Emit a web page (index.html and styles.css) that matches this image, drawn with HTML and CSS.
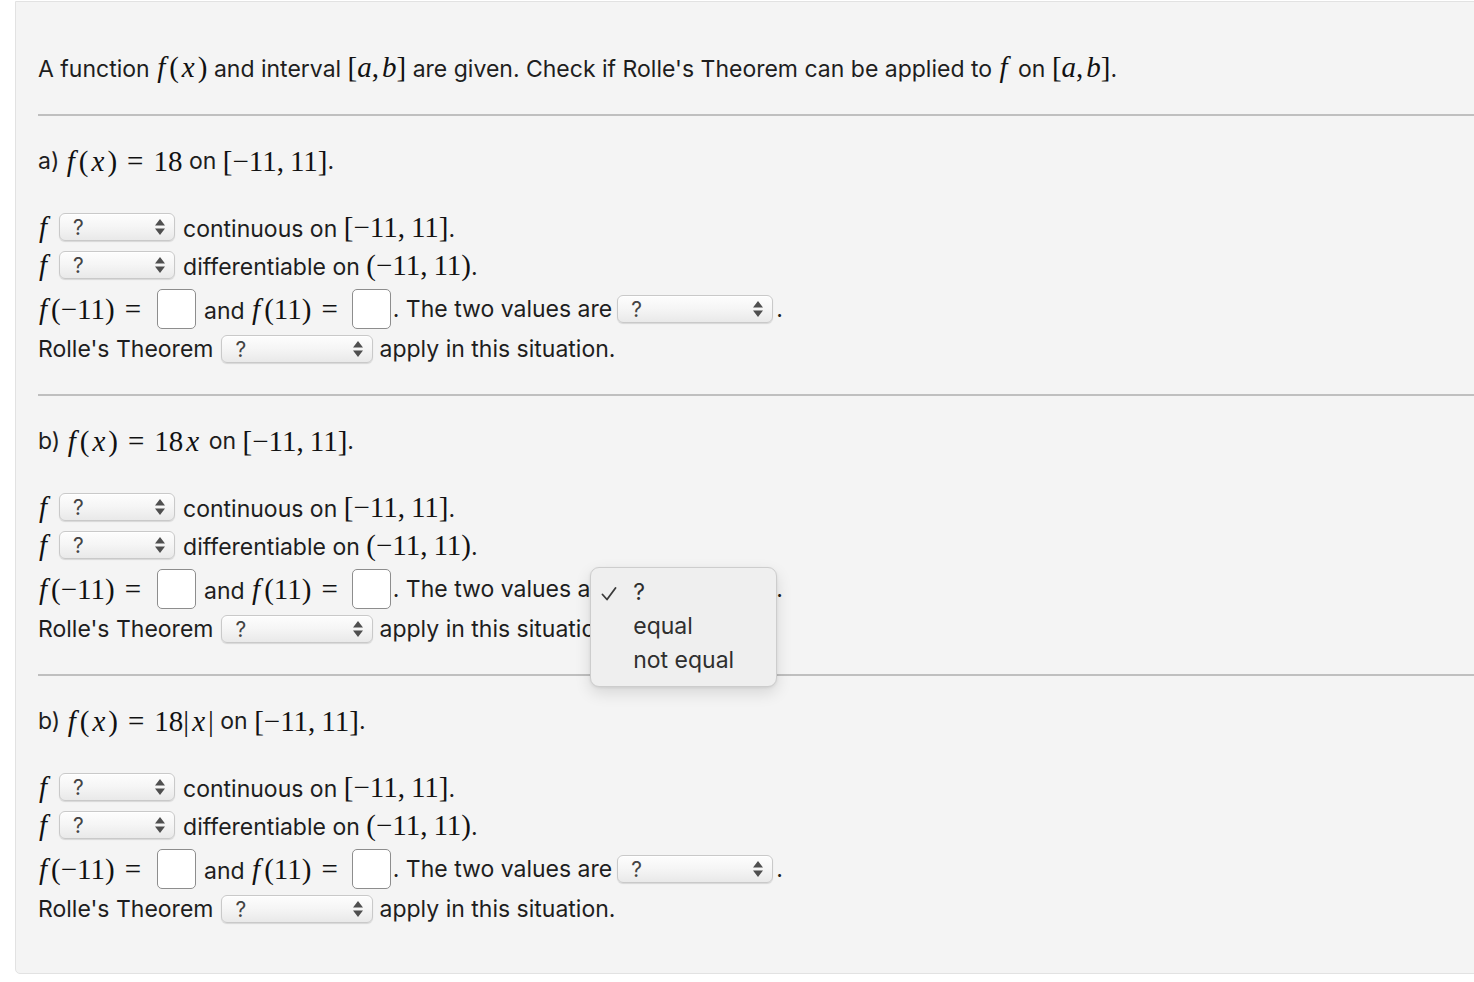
FILE: index.html
```html
<!DOCTYPE html>
<html>
<head>
<meta charset="utf-8">
<link rel="stylesheet" href="styles.css">
</head>
<body>
<div class="card">
  <div class="intro">A function <span class="m"><i class="f">f</i>(<i class="v">x</i>)</span> and interval <span class="m">[<i>a</i>,<span class="th"></span><i>b</i>]</span> are given. Check if Rolle's Theorem can be applied to <span class="m"><i class="f">f</i></span> on <span class="m">[<i>a</i>,<span class="th"></span><i>b</i>]</span>.</div>
  <div class="rule"></div>

  <div class="part">
    <div class="title">a)&nbsp;<span class="m"><i class="f">f</i>(<i class="v">x</i>)<span class="rel">=</span>18</span>&nbsp;on&nbsp;<span class="m">[−11,<span class="th"></span>11]</span>.</div>
    <div class="row r1"><span class="m"><i class="f">f</i></span><span class="sel s1"><span class="q">?</span><span class="arr"><svg width="10" height="16" viewBox="0 0 10 16"><path d="M5 0 L10 6.5 L0 6.5 Z M5 16 L10 9.5 L0 9.5 Z" fill="#4f4f4f"/></svg></span></span><span class="txt">continuous on&nbsp;<span class="m">[−11,<span class="th"></span>11]</span>.</span></div>
    <div class="row r2"><span class="m"><i class="f">f</i></span><span class="sel s1"><span class="q">?</span><span class="arr"><svg width="10" height="16" viewBox="0 0 10 16"><path d="M5 0 L10 6.5 L0 6.5 Z M5 16 L10 9.5 L0 9.5 Z" fill="#4f4f4f"/></svg></span></span><span class="txt">differentiable on&nbsp;<span class="m">(−11,<span class="th"></span>11)</span>.</span></div>
    <div class="row r3"><span class="m"><i class="f">f</i>(−11)<span class="rel">=</span></span><span class="box"></span><span class="txt">and&nbsp;<span class="m"><i class="f">f</i>(11)<span class="rel">=</span></span></span><span class="box b2"></span><span class="txt t3">. The two values are</span><span class="sel s3"><span class="q">?</span><span class="arr"><svg width="10" height="16" viewBox="0 0 10 16"><path d="M5 0 L10 6.5 L0 6.5 Z M5 16 L10 9.5 L0 9.5 Z" fill="#4f4f4f"/></svg></span></span><span class="dot">.</span></div>
    <div class="row r4"><span class="lbl">Rolle's Theorem</span><span class="sel s2"><span class="q">?</span><span class="arr"><svg width="10" height="16" viewBox="0 0 10 16"><path d="M5 0 L10 6.5 L0 6.5 Z M5 16 L10 9.5 L0 9.5 Z" fill="#4f4f4f"/></svg></span></span><span class="txt t4">apply in this situation.</span></div>
  </div>
  <div class="rule"></div>

  <div class="part">
    <div class="title">b)&nbsp;<span class="m"><i class="f">f</i>(<i class="v">x</i>)<span class="rel">=</span>18<i class="v">x</i></span>&nbsp;on&nbsp;<span class="m">[−11,<span class="th"></span>11]</span>.</div>
    <div class="row r1"><span class="m"><i class="f">f</i></span><span class="sel s1"><span class="q">?</span><span class="arr"><svg width="10" height="16" viewBox="0 0 10 16"><path d="M5 0 L10 6.5 L0 6.5 Z M5 16 L10 9.5 L0 9.5 Z" fill="#4f4f4f"/></svg></span></span><span class="txt">continuous on&nbsp;<span class="m">[−11,<span class="th"></span>11]</span>.</span></div>
    <div class="row r2"><span class="m"><i class="f">f</i></span><span class="sel s1"><span class="q">?</span><span class="arr"><svg width="10" height="16" viewBox="0 0 10 16"><path d="M5 0 L10 6.5 L0 6.5 Z M5 16 L10 9.5 L0 9.5 Z" fill="#4f4f4f"/></svg></span></span><span class="txt">differentiable on&nbsp;<span class="m">(−11,<span class="th"></span>11)</span>.</span></div>
    <div class="row r3"><span class="m"><i class="f">f</i>(−11)<span class="rel">=</span></span><span class="box"></span><span class="txt">and&nbsp;<span class="m"><i class="f">f</i>(11)<span class="rel">=</span></span></span><span class="box b2"></span><span class="txt t3">. The two values are</span><span class="anchor"><span class="sel s3"><span class="q">?</span><span class="arr"><svg width="10" height="16" viewBox="0 0 10 16"><path d="M5 0 L10 6.5 L0 6.5 Z M5 16 L10 9.5 L0 9.5 Z" fill="#4f4f4f"/></svg></span></span><span class="menu"><span class="item"><svg class="chk" width="16" height="14" viewBox="0 0 16 14"><path d="M1.5 7.5 L6 12.5 L14.5 1" fill="none" stroke="#3a3a3a" stroke-width="1.8" stroke-linecap="round" stroke-linejoin="round"/></svg>?</span><span class="item">equal</span><span class="item">not equal</span></span></span><span class="dot">.</span></div>
    <div class="row r4"><span class="lbl">Rolle's Theorem</span><span class="sel s2"><span class="q">?</span><span class="arr"><svg width="10" height="16" viewBox="0 0 10 16"><path d="M5 0 L10 6.5 L0 6.5 Z M5 16 L10 9.5 L0 9.5 Z" fill="#4f4f4f"/></svg></span></span><span class="txt t4">apply in this situation.</span></div>
  </div>
  <div class="rule"></div>

  <div class="part last">
    <div class="title">b)&nbsp;<span class="m"><i class="f">f</i>(<i class="v">x</i>)<span class="rel">=</span>18|<i class="v">x</i>|</span>&nbsp;on&nbsp;<span class="m">[−11,<span class="th"></span>11]</span>.</div>
    <div class="row r1"><span class="m"><i class="f">f</i></span><span class="sel s1"><span class="q">?</span><span class="arr"><svg width="10" height="16" viewBox="0 0 10 16"><path d="M5 0 L10 6.5 L0 6.5 Z M5 16 L10 9.5 L0 9.5 Z" fill="#4f4f4f"/></svg></span></span><span class="txt">continuous on&nbsp;<span class="m">[−11,<span class="th"></span>11]</span>.</span></div>
    <div class="row r2"><span class="m"><i class="f">f</i></span><span class="sel s1"><span class="q">?</span><span class="arr"><svg width="10" height="16" viewBox="0 0 10 16"><path d="M5 0 L10 6.5 L0 6.5 Z M5 16 L10 9.5 L0 9.5 Z" fill="#4f4f4f"/></svg></span></span><span class="txt">differentiable on&nbsp;<span class="m">(−11,<span class="th"></span>11)</span>.</span></div>
    <div class="row r3"><span class="m"><i class="f">f</i>(−11)<span class="rel">=</span></span><span class="box"></span><span class="txt">and&nbsp;<span class="m"><i class="f">f</i>(11)<span class="rel">=</span></span></span><span class="box b2"></span><span class="txt t3">. The two values are</span><span class="sel s3"><span class="q">?</span><span class="arr"><svg width="10" height="16" viewBox="0 0 10 16"><path d="M5 0 L10 6.5 L0 6.5 Z M5 16 L10 9.5 L0 9.5 Z" fill="#4f4f4f"/></svg></span></span><span class="dot">.</span></div>
    <div class="row r4"><span class="lbl">Rolle's Theorem</span><span class="sel s2"><span class="q">?</span><span class="arr"><svg width="10" height="16" viewBox="0 0 10 16"><path d="M5 0 L10 6.5 L0 6.5 Z M5 16 L10 9.5 L0 9.5 Z" fill="#4f4f4f"/></svg></span></span><span class="txt t4">apply in this situation.</span></div>
  </div>
</div>
</body>
</html>
```

FILE: styles.css
```css
html, body {
  margin: 0;
  padding: 0;
  background: #ffffff;
  overflow: hidden;
}
body {
  font-family: Inter, "Liberation Sans", Arial, sans-serif;
  font-size: 23px;
  color: #1e1e1e;
}
.card {
  margin: 1px 0 0 15px;
  width: 1500px;
  background: #f4f4f4;
  border: 1px solid #e2e2e2;
  border-radius: 0 0 0 5px;
  padding: 45px 0 49px 22px;
  box-sizing: border-box;
}
.intro {
  height: 40px;
  line-height: 40px;
  margin-bottom: 27px;
  white-space: nowrap;
}
.intro .th { width: 3px; }
.rule {
  height: 2px;
  background: #bfbfbf;
}
.part {
  padding-top: 25px;
  padding-bottom: 30px;
}
.part.last {
  padding-bottom: 0;
}
.title {
  height: 40px;
  line-height: 40px;
  margin-bottom: 27px;
  white-space: nowrap;
  display: flex;
  align-items: center;
}
.m {
  font-family: "Liberation Serif", "Times New Roman", serif;
  font-size: 29px;
  color: #111;
  white-space: nowrap;
}
.m i {
  font-style: italic;
}
.m i.f {
  padding: 0 4px 0 1px;
}
.m i.v {
  padding: 0 3px;
}
.th {
  display: inline-block;
  width: 6px;
}
.rel {
  margin: 0 10px;
}
.row {
  display: flex;
  align-items: center;
  white-space: nowrap;
}
.r1, .r2 { height: 38px; }
.r3 { height: 50px; }
.r4 { height: 30px; }
.txt { margin-left: 8px; }
.t3 { margin-left: 2px; }
.t4 { margin-left: 6px; }
.lbl { margin-right: 8px; }
.sel {
  display: inline-flex;
  align-items: center;
  justify-content: space-between;
  box-sizing: border-box;
  height: 28px;
  margin-left: 8px;
  padding: 0 9px 0 13px;
  border: 1px solid #c9c9c9;
  border-radius: 6px;
  background: linear-gradient(#fdfdfd, #f6f6f6 45%, #e9e9e9);
  box-shadow: 0 1px 1px rgba(0,0,0,0.12), inset 0 1px 0 #fff;
  font-size: 21px;
  color: #444;
}
.s1 { width: 116px; }
.s2 { width: 152px; margin-left: 0; }
.s3 { width: 156px; margin-left: 5px; }
.q { line-height: 1; }
.arr { display: flex; align-items: center; }
.box {
  display: inline-block;
  box-sizing: border-box;
  width: 39px;
  height: 40px;
  margin-left: 6px;
  background: #fff;
  border: 1.5px solid #8d8d8d;
  border-radius: 5px;
}
.b2 { margin-left: 4px; }
.dot { margin-left: 3px; }
.anchor {
  position: relative;
  display: inline-flex;
}
.menu {
  position: absolute;
  left: -22px;
  top: -8px;
  width: 187px;
  box-sizing: border-box;
  padding: 7px 0 9px 0;
  background: #efefef;
  border: 1px solid #cdcdcd;
  border-radius: 9px;
  box-shadow: 0 6px 16px rgba(0,0,0,0.12), 0 1px 3px rgba(0,0,0,0.08);
  z-index: 5;
  display: flex;
  flex-direction: column;
}
.item {
  position: relative;
  display: block;
  height: 34px;
  line-height: 34px;
  padding-left: 42px;
  color: #2f2f2f;
  font-size: 23px;
}
.chk {
  position: absolute;
  left: 10px;
  top: 12px;
}
```
